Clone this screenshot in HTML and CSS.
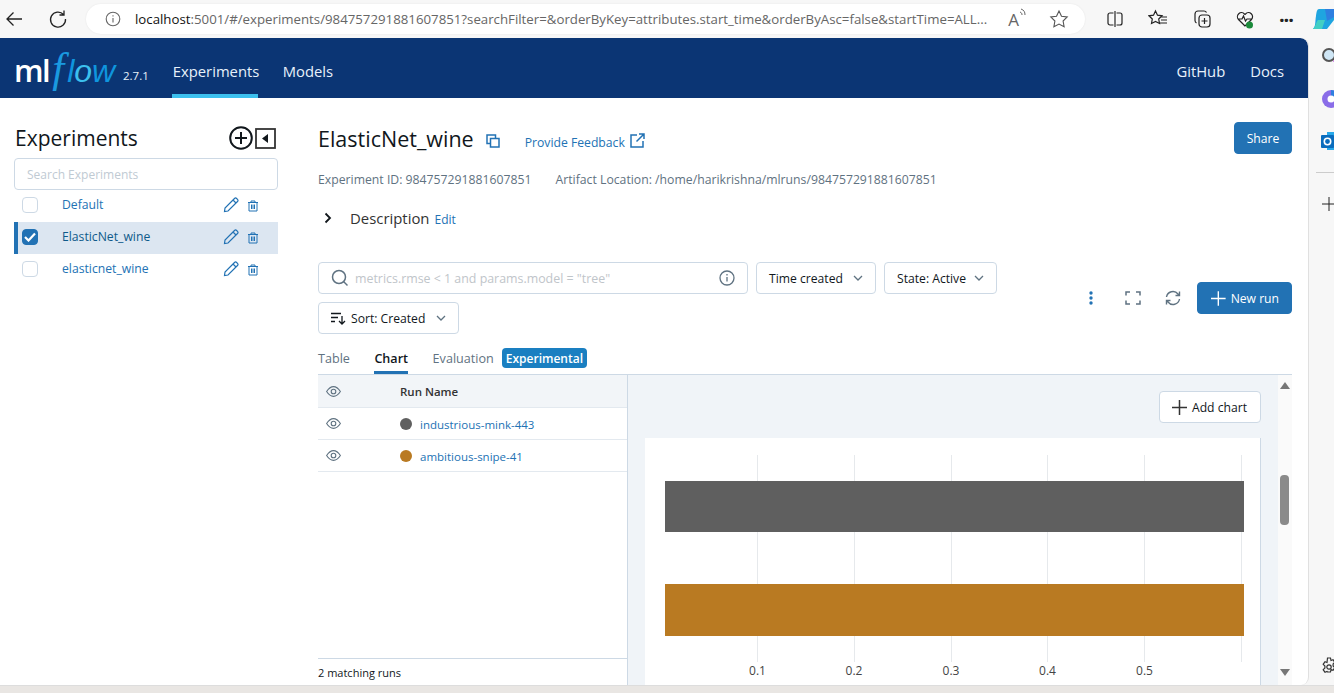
FILE: index.html
```html
<!DOCTYPE html>
<html lang="en">
<head>
    <meta charset="UTF-8">
    <meta name="viewport" content="width=device-width, initial-scale=1.0">
    <title>MLflow Experiments</title>
    <link rel="stylesheet" href="styles.css">
</head>
<body>

    <div class="toolbar">
        <svg class="tool-back" width="20" height="20" viewBox="0 0 20 20" fill="none" stroke="#222" stroke-width="1.3"><path d="M18 10H3M9.5 3.5 3 10l6.500 6.500"/></svg>
        <svg class="tool-reload" width="20" height="20" viewBox="0 0 20 20" fill="none" stroke="#222" stroke-width="1.3"><path d="M15.500 5.500A7.500 7.500 0 1 0 17.500 10M16 1.500v4.500h-4.500"/></svg>
        <div class="url-bar">
            <svg width="18" height="18" viewBox="0 0 18 18" fill="none" stroke="#666" stroke-width="1.1"><circle cx="9" cy="9" r="6.800"/><path d="M9 8v4.500M9 5.300v1.200"/></svg>
            <span class="url-text"><b>localhost</b>:5001/#/experiments/984757291881607851?searchFilter=&amp;orderByKey=attributes.start_time&amp;orderByAsc=false&amp;startTime=ALL...</span>
            <span class="url-aloud">A<svg width="10" height="12" viewBox="0 0 10 12" fill="none" stroke="#666"><path d="M2 1c3 1 4 3 4 6M1 4c1.500.500 2 1.500 2 3"/></svg></span>
            <svg width="20" height="20" viewBox="0 0 20 20" fill="none" stroke="#555" stroke-width="1.1"><path d="m10 2 2.500 5.200 5.700.800-4.100 4 1 5.700L10 15l-5.100 2.700 1-5.700-4.100-4 5.700-.800z"/></svg>
        </div>
        <div class="tool-icons">
            <svg width="20" height="20" viewBox="0 0 20 20" fill="none" stroke="#222" stroke-width="1.2"><rect x="3" y="4" width="14" height="12" rx="2"/><path d="M10 2v16" stroke="#fff" stroke-width="3"/><path d="M10 2v16"/></svg>
            <svg width="20" height="20" viewBox="0 0 20 20" fill="none" stroke="#222" stroke-width="1.2"><path d="m7.500 2 2 4.200 4.500.600-3.300 3.200.800 4.500-4-2.100-4 2.100.800-4.500L1 6.800l4.500-.600zM13 8h6M13 11h6M12 14h7"/></svg>
            <svg width="20" height="20" viewBox="0 0 20 20" fill="none" stroke="#222" stroke-width="1.2"><rect x="7" y="6" width="11" height="12" rx="3"/><path d="M12.500 9v6M9.500 12h6M4.500 14A3 3 0 0 1 3 11.500V5a3 3 0 0 1 3-3h6c1 0 2 .500 2.500 1.500"/></svg>
            <svg width="20" height="20" viewBox="0 0 20 20" fill="none" stroke="#222" stroke-width="1.2"><path d="M10 17 3.500 10.500a4 4 0 0 1 6-5.500l.5.500.5-.500a4 4 0 0 1 6 5.500L10 17zM3 10h4l1.500-3 2 5 1.500-2h5"/><circle cx="14.500" cy="16" r="3.500" fill="#1a8a3a" stroke="none"/></svg>
            <span class="tool-dots">&middot;&middot;&middot;</span>
        </div>
        <svg class="tool-copilot" width="23" height="24" viewBox="0 0 23 24"><path d="M8 2h15v11l-7 9H2c3-3 2-8 3-13 .500-4 1-7 3-7z" fill="#1fa5e0"/><path d="M14 2h9v8l-7 4z" fill="#2f7fe0"/><path d="M2 22c3-3 3-7 5-9h7l-3 9z" fill="#42cfc4"/></svg>
    </div>

    <div class="desktop">
        <div class="window">

            <header class="topbar">
                <div class="logo"><span class="logo-ml">ml</span><span class="logo-f">f</span><span class="logo-low">l<em>o</em>w</span></div>
                <span class="version">2.7.1</span>
                <nav class="nav-left">
                    <a class="nav-link active" href="#">Experiments</a>
                    <a class="nav-link" href="#">Models</a>
                </nav>
                <nav class="nav-right">
                    <a class="nav-link" href="#">GitHub</a>
                    <a class="nav-link" href="#">Docs</a>
                </nav>
            </header>

            <div class="main">
                <aside class="sidebar">
                    <div class="side-head">
                        <h2>Experiments</h2>
                        <svg class="side-add" width="24" height="24" viewBox="0 0 24 24" fill="none" stroke="#11171c" stroke-width="2"><circle cx="12" cy="12" r="10.800"/><path d="M12 6v12M6 12h12"/></svg>
                        <svg width="21" height="21" viewBox="0 0 21 21" fill="none" stroke="#333" stroke-width="1.800"><rect x="1" y="1" width="19" height="19"/><path d="M13 6v9l-6-4.500z" fill="#11171c" stroke="none"/></svg>
                    </div>
                    <input class="side-search" type="text" placeholder="Search Experiments">
                    <ul class="exp-list">
                        <li class="exp-row">
                            <span class="check"></span>
                            <a href="#">Default</a>
                            <svg class="pen" width="16" height="16" viewBox="0 0 16 16" fill="none" stroke="#2272b4" stroke-width="1.200"><path d="M1.500 14.500 2 11 11.500 1.500a1.500 1.500 0 0 1 2.100 0l.9.900a1.500 1.500 0 0 1 0 2.100L5 14zM10 3l3 3"/></svg>
                            <svg class="bin" width="12" height="12" viewBox="0 0 12 12" fill="none" stroke="#2272b4"><path d="M1 2.500h10M4 2.500V1h4v1.500M2 2.500V11h8V2.500M4.500 4.500v4.500M6 4.500v4.500M7.500 4.500v4.500"/></svg>
                        </li>
                        <li class="exp-row selected">
                            <span class="check checked"><svg width="12" height="10" viewBox="0 0 12 10" fill="none" stroke="#fff" stroke-width="2.200"><path d="m1 5 3.500 3.500L11 1.500"/></svg></span>
                            <a href="#">ElasticNet_wine</a>
                            <svg class="pen" width="16" height="16" viewBox="0 0 16 16" fill="none" stroke="#2272b4" stroke-width="1.200"><path d="M1.500 14.500 2 11 11.500 1.500a1.500 1.500 0 0 1 2.100 0l.9.900a1.500 1.500 0 0 1 0 2.100L5 14zM10 3l3 3"/></svg>
                            <svg class="bin" width="12" height="12" viewBox="0 0 12 12" fill="none" stroke="#2272b4"><path d="M1 2.500h10M4 2.500V1h4v1.500M2 2.500V11h8V2.500M4.500 4.500v4.500M6 4.500v4.500M7.500 4.500v4.500"/></svg>
                        </li>
                        <li class="exp-row">
                            <span class="check"></span>
                            <a href="#">elasticnet_wine</a>
                            <svg class="pen" width="16" height="16" viewBox="0 0 16 16" fill="none" stroke="#2272b4" stroke-width="1.200"><path d="M1.500 14.500 2 11 11.500 1.500a1.500 1.500 0 0 1 2.100 0l.9.900a1.500 1.500 0 0 1 0 2.100L5 14zM10 3l3 3"/></svg>
                            <svg class="bin" width="12" height="12" viewBox="0 0 12 12" fill="none" stroke="#2272b4"><path d="M1 2.500h10M4 2.500V1h4v1.500M2 2.500V11h8V2.500M4.500 4.500v4.500M6 4.500v4.500M7.500 4.500v4.500"/></svg>
                        </li>
                    </ul>
                </aside>

                <section class="content">
                    <div class="title-row">
                        <h1>ElasticNet_wine</h1>
                        <svg class="copy" width="14" height="14" viewBox="0 0 14 14" fill="none" stroke="#2272b4" stroke-width="1.500"><rect x="4.500" y="4.500" width="8.500" height="8.500"/><path d="M4.500 9.500H1V1h8.500v3.500"/></svg>
                        <a class="feedback" href="#">Provide Feedback</a>
                        <svg class="ext" width="15" height="15" viewBox="0 0 15 15" fill="none" stroke="#2272b4" stroke-width="1.500"><path d="M7 2H1v12h12V8M9 1h5v5M14 1 6.500 8.500"/></svg>
                        <button class="btn primary share">Share</button>
                    </div>
                    <div class="meta">
                        <span>Experiment ID: 984757291881607851</span>
                        <span>Artifact Location: /home/harikrishna/mlruns/984757291881607851</span>
                    </div>
                    <div class="desc">
                        <svg width="8" height="12" viewBox="0 0 8 12" fill="none" stroke="#11171c" stroke-width="1.800"><path d="m1.500 1.500 4.500 4.500-4.500 4.500"/></svg>
                        <span class="desc-label">Description</span>
                        <a href="#">Edit</a>
                    </div>

                    <div class="controls">
                        <div class="filters">
                            <div class="run-search">
                                <svg width="18" height="18" viewBox="0 0 18 18" fill="none" stroke="#5f7281" stroke-width="1.500"><circle cx="8" cy="8" r="6.500"/><path d="m12.500 12.500 4 4"/></svg>
                                <span class="placeholder">metrics.rmse &lt; 1 and params.model = "tree"</span>
                                <svg width="16" height="16" viewBox="0 0 16 16" fill="none" stroke="#5f7281" stroke-width="1.300"><circle cx="8" cy="8" r="7"/><path d="M8 7v4.500M8 4v1.500"/></svg>
                            </div>
                            <button class="btn select time">Time created<svg width="10" height="6" viewBox="0 0 10 6" fill="none" stroke="#5f7281" stroke-width="1.300"><path d="m1 1 4 4 4-4"/></svg></button>
                            <button class="btn select state">State: Active<svg width="10" height="6" viewBox="0 0 10 6" fill="none" stroke="#5f7281" stroke-width="1.300"><path d="m1 1 4 4 4-4"/></svg></button>
                            <button class="btn select sort">
                                <svg width="15" height="13" viewBox="0 0 15 13" fill="none" stroke="#11171c" stroke-width="1.300"><path d="M0 1.500h10M0 5.500h7M0 9.500h4M11 4v8M8 9l3 3 3-3"/></svg>
                                <span class="sort-label">Sort: Created</span><svg width="10" height="6" viewBox="0 0 10 6" fill="none" stroke="#5f7281" stroke-width="1.300"><path d="m1 1 4 4 4-4"/></svg></button>
                        </div>
                        <div class="actions">
                            <svg class="act-more" width="4" height="14" viewBox="0 0 4 14" fill="#2272b4"><circle cx="2" cy="2" r="1.700"/><circle cx="2" cy="7" r="1.700"/><circle cx="2" cy="12" r="1.700"/></svg>
                            <svg class="act-full" width="16" height="14" viewBox="0 0 16 14" fill="none" stroke="#5f7281" stroke-width="1.500"><path d="M1 4.500V1h4M11 1h4v3.500M15 9.500V13h-4M5 13H1V9.500"/></svg>
                            <svg class="act-sync" width="16" height="16" viewBox="0 0 16 16" fill="none" stroke="#5f7281" stroke-width="1.400"><path d="M1.500 7A6.500 6.500 0 0 1 13 4l1.500 1.500M14.500 9A6.500 6.500 0 0 1 3 12l-1.500-1.500M14.500 1.500v4h-4M1.500 14.500v-4h4"/></svg>
                            <button class="btn primary new-run"><svg width="15" height="15" viewBox="0 0 15 15" stroke="#fff" stroke-width="1.400"><path d="M7.500 0v15M0 7.500h15"/></svg>New run</button>
                        </div>
                    </div>

                    <div class="tabs">
                        <span class="tab">Table</span>
                        <span class="tab active">Chart</span>
                        <span class="tab">Evaluation</span>
                        <span class="badge">Experimental</span>
                    </div>

                    <div class="compare">
                        <div class="runs">
                            <div class="run-row head">
                                <svg width="15" height="11" viewBox="0 0 15 11" fill="none" stroke="#5f7281" stroke-width="1.100"><path d="M.6 5.500C3 1.800 5 .6 7.500.6s4.500 1.200 6.900 4.900c-2.400 3.700-4.400 4.900-6.900 4.900S3 9.200.6 5.500z"/><circle cx="7.500" cy="5.500" r="2.300"/></svg>
                                <span class="run-name">Run Name</span>
                            </div>
                            <div class="run-row">
                                <svg width="15" height="11" viewBox="0 0 15 11" fill="none" stroke="#5f7281" stroke-width="1.100"><path d="M.6 5.500C3 1.800 5 .6 7.500.6s4.500 1.200 6.900 4.900c-2.400 3.700-4.400 4.900-6.900 4.900S3 9.200.6 5.500z"/><circle cx="7.500" cy="5.500" r="2.300"/></svg>
                                <i class="dot dot-grey"></i>
                                <a href="#">industrious-mink-443</a>
                            </div>
                            <div class="run-row">
                                <svg width="15" height="11" viewBox="0 0 15 11" fill="none" stroke="#5f7281" stroke-width="1.100"><path d="M.6 5.500C3 1.800 5 .6 7.500.6s4.500 1.200 6.900 4.900c-2.400 3.700-4.400 4.900-6.900 4.900S3 9.200.6 5.500z"/><circle cx="7.500" cy="5.500" r="2.300"/></svg>
                                <i class="dot dot-brown"></i>
                                <a href="#">ambitious-snipe-41</a>
                            </div>
                            <div class="run-foot">2 matching runs</div>
                        </div>
                        <div class="charts">
                            <div class="charts-head">
                                <button class="btn add-chart"><svg width="15" height="15" viewBox="0 0 15 15" stroke="#333" stroke-width="1.500"><path d="M7.500 0v15M0 7.500h15"/></svg>Add chart</button>
                            </div>
                            <div class="chart-card">
                                <svg class="plot" width="616" height="247" viewBox="0 0 616 247">
                                    <g stroke="#e6e9ec">
                                        <path d="M112.500 17v207M209.500 17v207M306.500 17v207M402.500 17v207M499.500 17v207M596.500 17v207"/>
                                    </g>
                                    <rect x="20" y="43" width="579" height="51" fill="#5f5f5f"/>
                                    <rect x="20" y="146" width="579" height="52" fill="#b97a22"/>
                                    <g class="ticks" text-anchor="middle">
                                        <text x="112.500" y="237">0.1</text>
                                        <text x="209" y="237">0.2</text>
                                        <text x="306" y="237">0.3</text>
                                        <text x="402.500" y="237">0.4</text>
                                        <text x="499.500" y="237">0.5</text>
                                    </g>
                                </svg>
                            </div>
                        </div>
                        <div class="scroll">
                            <i class="arrow-up"></i>
                            <i class="thumb"></i>
                            <i class="arrow-down"></i>
                        </div>
                    </div>
                </section>
            </div>
        </div>

        <div class="edge">
            <svg width="20" height="20" viewBox="0 0 20 20" fill="none"><circle cx="8" cy="8" r="6" fill="#cfe6f5" stroke="#555" stroke-width="2"/><path d="m13 13 5 4" stroke="#c23be0" stroke-width="3"/></svg>
            <svg width="20" height="22" viewBox="0 0 20 22"><circle cx="10" cy="11" r="9" fill="#8a6de8"/><path d="M10 2a9 9 0 0 1 9 9h-6a3 3 0 0 0-3-3z" fill="#2f7fe0"/><circle cx="10" cy="11" r="3.500" fill="#fff"/></svg>
            <svg width="20" height="20" viewBox="0 0 20 20"><rect x="6" y="1" width="14" height="18" fill="#28a8ea"/><rect x="0" y="4" width="13" height="13" rx="1" fill="#0a6cbd"/><circle cx="6.500" cy="10.500" r="3.200" fill="none" stroke="#fff" stroke-width="1.600"/></svg>
            <hr>
            <svg class="edge-plus" width="16" height="16" viewBox="0 0 16 16" stroke="#222"><path d="M8 1v14M1 8h14"/></svg>
            <svg class="edge-gear" width="16" height="18" viewBox="0 0 16 18" fill="none" stroke="#333" stroke-width="1.200"><path d="M6.500 1h3l.5 2.500 2-.8 1.800 2.600-1.700 1.700v2l1.700 1.700-1.800 2.600-2-.8-.5 2.500h-3L6 14.500l-2 .8-1.800-2.600L3.900 11V9L2.200 7.300 4 4.700l2 .8z"/><circle cx="8" cy="10" r="2.200"/></svg>
        </div>
    </div>
    <div class="taskbar"></div>

</body>
</html>
```

FILE: styles.css
```css
/* page frame */
* {
    box-sizing: border-box;
}

body {
    margin: 0;
    height: 693px;
    overflow: hidden;
    font-family: 'Open Sans', 'Noto Sans', sans-serif;
    font-size: 12px;
    color: #11171c;
    background: #f7f7f7;
}

a {
    color: #2272b4;
    text-decoration: none;
}

/* browser toolbar */
.toolbar {
    height: 38px;
    display: flex;
    align-items: center;
    background: #f7f7f7;
    overflow: hidden;
}

.toolbar > svg,
.toolbar > div {
    flex-shrink: 0;
}

.tool-back {
    margin-left: 4px;
}

.tool-reload {
    margin-left: 24px;
}

.url-bar {
    width: 999px;
    height: 30px;
    margin-left: 18px;
    padding: 0 16px 0 18px;
    display: flex;
    align-items: center;
    background: #fff;
    border-radius: 15px;
    box-shadow: 0 0 2px rgba(0, 0, 0, 0.08);
}

.url-text {
    margin-left: 13px;
    flex: 1;
    font-size: 13.250px;
    color: #666;
    white-space: nowrap;
    overflow: hidden;
}

.url-text b {
    font-weight: 400;
    color: #111;
}

.url-aloud {
    margin: 0 20px 0 19px;
    display: flex;
    font-size: 17px;
    color: #666;
}

.tool-icons {
    margin-left: 20px;
    width: 188px;
    display: flex;
    align-items: center;
    justify-content: space-between;
}

.tool-dots {
    font-size: 20px;
    font-weight: 700;
    letter-spacing: -1px;
    color: #222;
}

.tool-copilot {
    margin-left: 18px;
}

/* window */
.desktop {
    height: 647px;
    display: flex;
}

.window {
    width: 1309px;
    background: #fff;
    border-right: 1px solid #e0e0e0;
    border-radius: 0 8px 8px 0;
    overflow: hidden;
}

.edge {
    flex: 1;
    padding-top: 9px;
    padding-left: 12px;
    display: flex;
    flex-direction: column;
    gap: 21px;
    overflow: hidden;
}

.edge svg {
    flex-shrink: 0;
}

.edge hr {
    width: 30px;
    margin: 0 0 0 -5px;
    border: 0;
    border-top: 1px solid #ccc;
}

.edge-plus {
    margin-top: 2px;
}

.edge-gear {
    margin-top: 424px;
}

.taskbar {
    height: 8px;
    background: #e9e6e3;
    border-top: 1px solid #ddd;
}

/* top navigation */
.topbar {
    height: 60px;
    padding-left: 14px;
    display: flex;
    background: #0b3574;
    border-radius: 0 8px 0 0;
    color: #e7f1fb;
}

.logo {
    width: 109px;
    height: 60px;
    padding-top: 5px;
    display: flex;
    align-items: baseline;
    color: #fff;
}

.logo-ml {
    font-size: 31px;
    font-weight: 600;
    letter-spacing: -1.500px;
}

.logo-f {
    margin: 0 3px 0 3px;
    font-family: 'Liberation Serif', serif;
    font-size: 43px;
    font-style: italic;
    color: #1a9ae0;
}

.logo-low {
    font-family: 'Liberation Sans', sans-serif;
    font-size: 32px;
    font-style: italic;
    color: #0f95de;
}

.logo-low em {
    color: #3cc0ee;
}

.version {
    margin-top: 30px;
    font-size: 11.500px;
    color: #e7f1fb;
}

.nav-left {
    margin-left: 23px;
    display: flex;
    gap: 25px;
}

.nav-right {
    margin-left: auto;
    padding-right: 24px;
    display: flex;
    gap: 25px;
}

.nav-link {
    height: 60px;
    padding-top: 22px;
    font-size: 14.800px;
    line-height: 22px;
    color: #e7f1fb;
}

.nav-link.active {
    width: 86px;
    padding-left: 1px;
    white-space: nowrap;
    border-bottom: 4px solid #3cc0ee;
}

/* sidebar */
.main {
    height: 587px;
    display: flex;
}

.sidebar {
    width: 318px;
    padding: 20px 0 0 14px;
    flex-shrink: 0;
}

.side-head {
    width: 264px;
    height: 40px;
    display: flex;
    align-items: center;
}

.side-head h2 {
    margin: 0 auto 0 1px;
    font-size: 21px;
    font-weight: 500;
}

.side-add {
    margin-right: 2px;
}

.side-head svg:last-child {
    margin-right: 2px;
}

.side-search {
    width: 264px;
    height: 32px;
    padding: 0 12px;
    display: block;
    border: 1px solid #cdd9e5;
    border-radius: 4px;
    font: inherit;
    font-size: 12px;
    outline: none;
}

.side-search::placeholder {
    color: #c0cad3;
}

.exp-list {
    width: 264px;
    margin: 0;
    padding: 0;
    list-style: none;
}

.exp-row {
    height: 32px;
    padding-left: 8px;
    display: flex;
    align-items: center;
    font-size: 12.200px;
}

.exp-row a {
    margin-left: 24px;
    flex: 1;
    position: relative;
    top: -2px;
}

.exp-row.selected {
    padding-left: 4px;
    background: #dce6f1;
    border-left: 4px solid #2272b4;
}

.exp-row.selected a {
    color: #0e5a8a;
}

.check {
    width: 16px;
    height: 16px;
    display: flex;
    align-items: center;
    justify-content: center;
    border: 1px solid #cdd9e5;
    border-radius: 4px;
    background: #fff;
    margin-top: -2px;
}

.check.checked {
    background: #2272b4;
    border-color: #2272b4;
}

.pen {
    margin-top: -3px;
}

.bin {
    margin: -1px 19px 0 8px;
}

/* experiment view */
.content {
    width: 974px;
    padding-top: 24px;
    flex-shrink: 0;
}

.title-row {
    height: 32px;
    display: flex;
    align-items: center;
}

h1 {
    margin: 2px 0 0;
    font-size: 21.500px;
    font-weight: 500;
    line-height: 32px;
}

.copy {
    margin: 5px 0 0 12px;
}

.feedback {
    margin: 9px 0 0 25px;
    font-size: 12.200px;
}

.ext {
    margin: 5px 0 0 5px;
}

.btn {
    height: 32px;
    padding: 0 12px;
    display: flex;
    align-items: center;
    background: #fff;
    border: 1px solid #cdd9e5;
    border-radius: 4px;
    font: inherit;
    font-size: 12.150px;
    color: #11171c;
    white-space: nowrap;
}

.btn.primary {
    background: #2272b4;
    border-color: #2272b4;
    color: #fff;
}

.share {
    width: 58px;
    margin-left: auto;
    justify-content: center;
}

.meta {
    margin-top: 17px;
    display: flex;
    gap: 24px;
    font-size: 12.240px;
    line-height: 18px;
    color: #5f7281;
}

.desc {
    margin-top: 17px;
    height: 24px;
    padding-left: 6px;
    display: flex;
    align-items: center;
}

.desc-label {
    margin-left: 18px;
    font-size: 14.900px;
    color: #333;
}

.desc a {
    margin-left: 5px;
    margin-top: 2px;
    font-size: 12px;
}

.controls {
    margin-top: 32px;
    display: flex;
    justify-content: space-between;
    align-items: center;
}

.filters {
    width: 700px;
    display: flex;
    flex-wrap: wrap;
    gap: 8px;
}

.run-search {
    width: 430px;
    height: 32px;
    padding: 0 12px;
    display: flex;
    align-items: center;
    border: 1px solid #cdd9e5;
    border-radius: 4px;
}

.placeholder {
    margin-left: 6px;
    flex: 1;
    color: #bfc5ca;
    font-size: 12.400px;
}

.select {
    justify-content: space-between;
}

.time {
    width: 120px;
}

.state {
    width: 113px;
}

.sort {
    width: 141px;
}

.sort-label {
    margin-left: 5px;
    margin-right: auto;
}

.actions {
    display: flex;
    align-items: center;
}

.act-more {
    margin-right: 32px;
}

.act-full {
    margin-right: 24px;
}

.act-sync {
    margin-right: 16px;
}

.new-run {
    width: 95px;
    padding: 0 12px 0 13px;
    gap: 5px;
}

.tabs {
    height: 41px;
    padding-top: 15px;
    display: flex;
    align-items: flex-start;
    border-bottom: 1px solid #cdd9e5;
}

.tab {
    height: 25px;
    margin-right: 24.500px;
    line-height: 20px;
    color: #5f7281;
    font-size: 12.600px;
}

.tab.active {
    color: #11171c;
    font-weight: 600;
    border-bottom: 3px solid #2272b4;
}

.tab:nth-child(3) {
    margin-right: 8px;
}

.badge {
    height: 20px;
    margin-top: -1px;
    padding: 0 4px;
    background: #1a7fc1;
    border-radius: 4px;
    color: #fff;
    font-weight: 600;
    font-size: 12px;
    line-height: 21px;
}

/* runs and charts */
.compare {
    height: 310px;
    display: flex;
}

.runs {
    width: 310px;
    display: flex;
    flex-direction: column;
    border-right: 1px solid #cdd9e5;
}

.run-row {
    height: 32px;
    padding-left: 8px;
    display: flex;
    align-items: center;
    border-bottom: 1px solid #e3e9ef;
}

.run-row.head {
    height: 33px;
    background: #f2f5f8;
}

.run-name {
    margin-left: 59px;
    font-weight: 600;
    font-size: 11.500px;
    color: #333;
}

.run-row a {
    margin-left: 8px;
    margin-top: 1px;
    font-size: 11.500px;
}

.dot {
    width: 12px;
    height: 12px;
    margin-left: 59px;
    border-radius: 50%;
}

.dot-grey {
    background: #5f5f5f;
}

.dot-brown {
    background: #b97a22;
}

.run-foot {
    margin-top: auto;
    height: 27px;
    border-top: 1px solid #cdd9e5;
    font-size: 11px;
    line-height: 28px;
}

.charts {
    width: 650px;
    padding: 0 17px;
    background: #f0f4f8;
}

.charts-head {
    height: 63px;
    padding-top: 16px;
    display: flex;
    justify-content: flex-end;
}

.add-chart {
    width: 102px;
    gap: 5px;
}

.chart-card {
    height: 247px;
    background: #fff;
    border-right: 1px solid #cdd9e5;
}

.plot {
    display: block;
}

.ticks {
    font-size: 12px;
    fill: #444;
}

.scroll {
    width: 14px;
    position: relative;
    background: #fafafa;
}

.thumb {
    position: absolute;
    top: 100px;
    left: 2px;
    width: 9px;
    height: 50px;
    border-radius: 4px;
    background: #8a8a8a;
}

.arrow-up,
.arrow-down {
    position: absolute;
    left: 2px;
    border-left: 5px solid transparent;
    border-right: 5px solid transparent;
}

.arrow-up {
    top: 7px;
    border-bottom: 7px solid #777;
}

.arrow-down {
    bottom: 9px;
    border-top: 7px solid #777;
}
```
